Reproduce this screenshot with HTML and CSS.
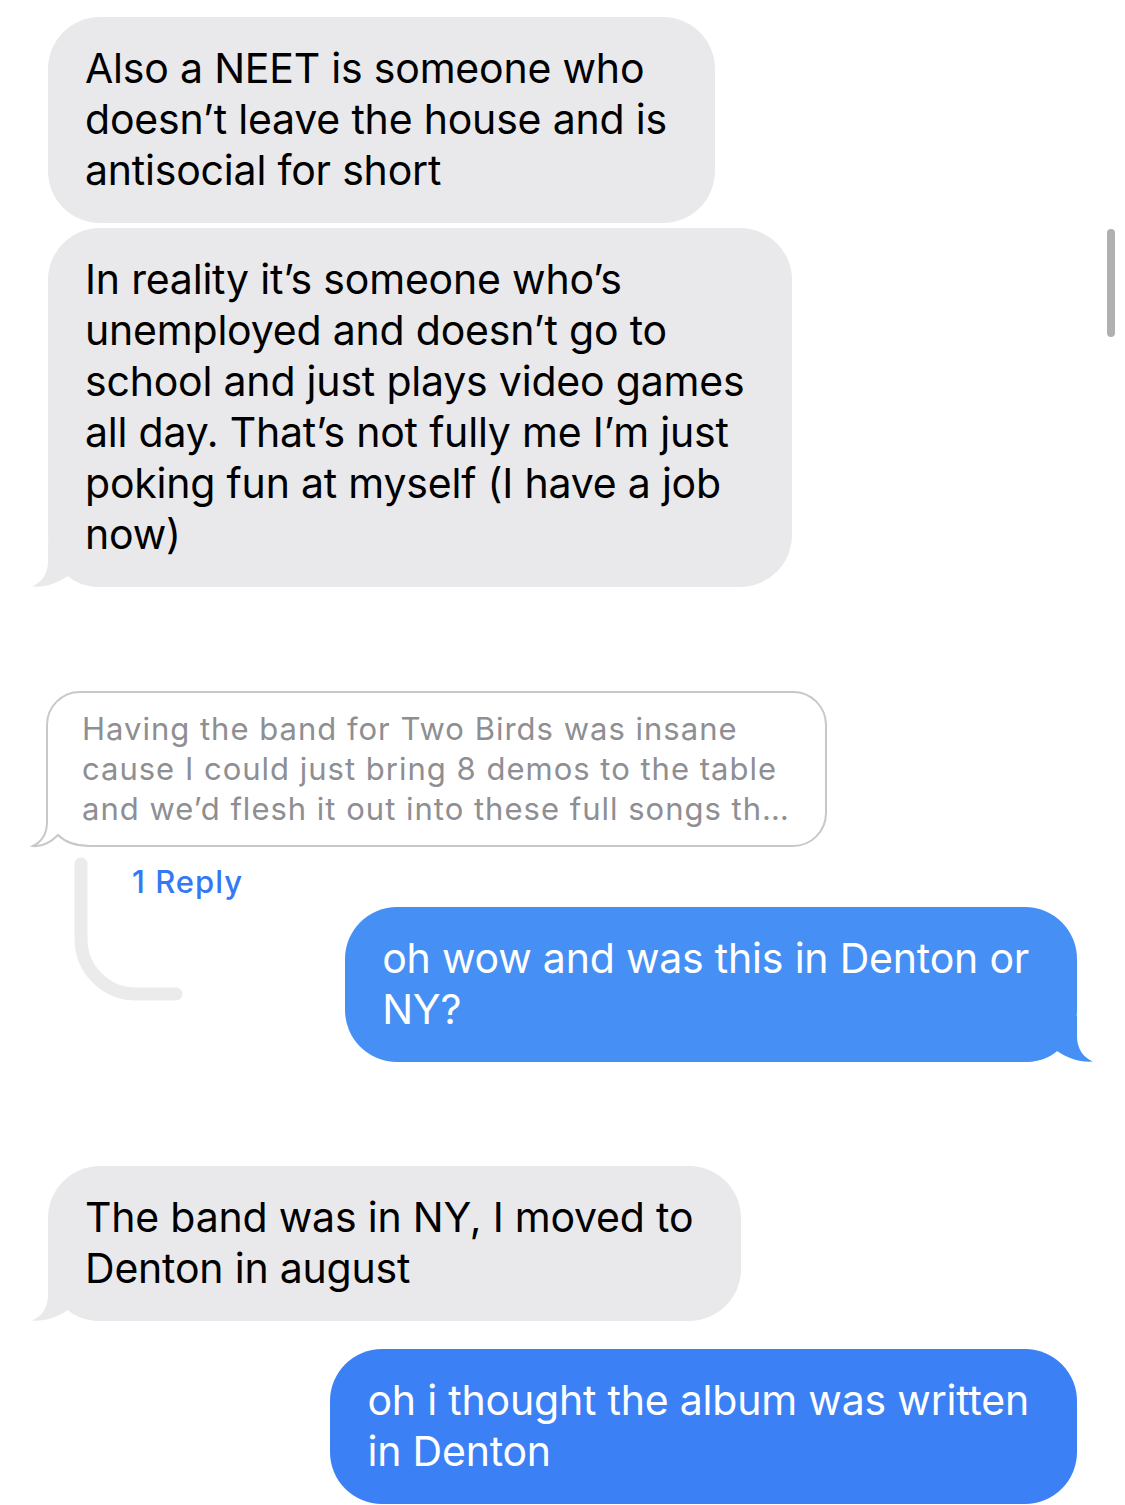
FILE: index.html
```html
<!DOCTYPE html>
<html lang="en">

<head>
    <meta charset="UTF-8">
    <meta name="viewport" content="width=device-width, initial-scale=1.0">
    <title>Messages</title>
    <link rel="stylesheet" href="styles.css">
</head>

<body>
    <div class="chat">
        <div class="bubble in">
            Also a NEET is someone who<br>
            doesn’t leave the house and is<br>
            antisocial for short
        </div>

        <div class="bubble in second">
            In reality it’s someone who’s<br>
            unemployed and doesn’t go to<br>
            school and just plays video games<br>
            all day. That’s not fully me I’m just<br>
            poking fun at myself (I have a job<br>
            now)
            <svg class="tail" viewBox="0 0 70 46"><path d="M16 0 V20 C16 33 10 41 0 45.5 C12 46.5 24 43 36 35 C44 42 54 46 70 46 V0 Z" /></svg>
        </div>

        <!-- reply thread -->
        <div class="thread">
            <svg class="thread-line" viewBox="0 0 140 160">
                <path d="M33 18 V93 A55 55 0 0 0 88 148 H128" />
            </svg>

            <div class="quoted">
                Having the band for Two Birds was insane<br>
                cause I could just bring 8 demos to the table<br>
                and we’d flesh it out into these full songs th…
                <svg class="quoted-tail" viewBox="0 0 80 47">
                    <rect x="15" y="6" width="65" height="41" />
                    <path d="M17 0 V20 C17 33 11 40 3 44 C12 45 21 40 28 33 C36 41 46 44 60 44 H80" />
                </svg>
            </div>

            <div class="reply-count">1 Reply</div>

            <div class="bubble out first-out">
                oh wow and was this in Denton or<br>
                NY?
                <svg class="tail" viewBox="0 0 70 46"><path d="M16 0 V20 C16 33 10 41 0 45.5 C12 46.5 24 43 36 35 C44 42 54 46 70 46 V0 Z" /></svg>
            </div>
        </div>

        <div class="bubble in third">
            The band was in NY, I moved to<br>
            Denton in august
            <svg class="tail" viewBox="0 0 70 46"><path d="M16 0 V20 C16 33 10 41 0 45.5 C12 46.5 24 43 36 35 C44 42 54 46 70 46 V0 Z" /></svg>
        </div>

        <div class="bubble out last-out">
            oh i thought the album was written<br>
            in Denton
        </div>
    </div>

    <div class="scrollbar"></div>
</body>

</html>
```

FILE: styles.css
```css
body {
    margin: 0;
    background-color: #ffffff;
    font-family: Inter, "Noto Sans", sans-serif;
    color: #000;
    overflow: hidden;
}

.chat {
    display: flex;
    flex-direction: column;
    padding: 17px 48px 0;
}

.bubble {
    position: relative;
    z-index: 0;
    box-sizing: border-box;
    width: fit-content;
    padding: 26px 48px 27px 37px;
    border-radius: 52px;
    font-size: 41px;
    line-height: 51px;
    letter-spacing: -0.2px;
    white-space: nowrap;
}

.in {
    align-self: flex-start;
    background-color: #e9e9eb;
    color: #000;
}

.out {
    align-self: flex-end;
    color: #fff;
}

.second {
    margin-top: 5px;
}

.third {
    margin-top: 104px;
}

.first-out {
    margin-top: 5px;
    background-color: #4690f5;
}

.last-out {
    margin-top: 28px;
    background-color: #3b81f5;
}

/* tails sit behind the text but over the bubble */
.tail {
    position: absolute;
    z-index: -1;
    left: -16px;
    bottom: 0;
    width: 70px;
    height: 46px;
}

.in .tail path {
    fill: #e9e9eb;
}

.out .tail {
    left: auto;
    right: -16px;
    transform: scaleX(-1);
}

.first-out .tail path {
    fill: #4690f5;
}

/* reply thread */
.thread {
    position: relative;
    display: flex;
    flex-direction: column;
    margin-top: 104px;
}

.thread-line {
    position: absolute;
    left: 0;
    top: 155px;
    width: 140px;
    height: 160px;
}

.thread-line path {
    fill: none;
    stroke: #ebebeb;
    stroke-width: 13;
    stroke-linecap: round;
}

.quoted {
    position: relative;
    z-index: 0;
    align-self: flex-start;
    box-sizing: border-box;
    width: 781px;
    margin-left: -2px;
    padding: 16px 20px 16px 34px;
    border: 2px solid #c8c8c9;
    border-radius: 34px;
    font-size: 31px;
    line-height: 40px;
    letter-spacing: 1px;
    white-space: nowrap;
    color: #8e8e93;
}

.quoted-tail {
    position: absolute;
    z-index: -1;
    left: -18px;
    bottom: -4px;
    width: 80px;
    height: 47px;
}

.quoted-tail rect {
    fill: #fff;
}

.quoted-tail path {
    fill: none;
    stroke: #c8c8c9;
    stroke-width: 2;
}

.reply-count {
    margin: 15px 0 0 84px;
    font-size: 31px;
    line-height: 40px;
    font-weight: 500;
    letter-spacing: 1px;
    color: #3478f6;
}

.scrollbar {
    position: fixed;
    top: 229px;
    left: 1107px;
    width: 8px;
    height: 108px;
    border-radius: 4px;
    background-color: #b0b0b0;
}
```
